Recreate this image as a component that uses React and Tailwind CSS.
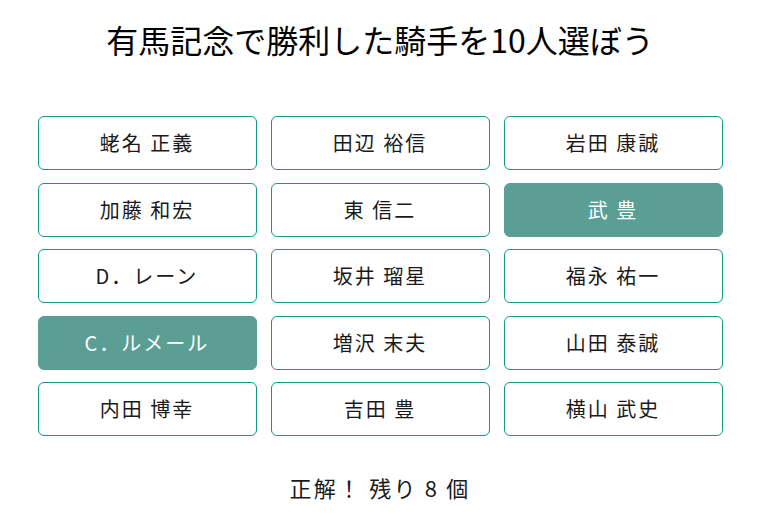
const JOCKEYS = [
  ["蛯名 正義", false],
  ["田辺 裕信", false],
  ["岩田 康誠", false],
  ["加藤 和宏", false],
  ["東 信二", false],
  ["武 豊", true],
  ["D．レーン", false],
  ["坂井 瑠星", false],
  ["福永 祐一", false],
  ["C．ルメール", true],
  ["増沢 末夫", false],
  ["山田 泰誠", false],
  ["内田 博幸", false],
  ["吉田 豊", false],
  ["横山 武史", false],
];

function JockeyButton({ name, picked }) {
  return (
    <button
      className={
        picked
          ? "h-[54px] rounded-[6px] border border-[#5a9e94] bg-[#5a9e94] text-white text-[20px] tracking-[0.1em]"
          : "h-[54px] rounded-[6px] border border-[#0f998a] bg-white text-[#1a1a1a] text-[20px] tracking-[0.1em]"
      }
    >
      {name}
    </button>
  );
}

export default function App() {
  return (
    <div
      className="w-[760px] h-[520px] bg-white flex flex-col items-center"
      style={{ fontFamily: '"Noto Sans CJK JP", "Noto Sans", sans-serif' }}
    >
      <h1 className="mt-[15px] text-[32px] leading-[48px] text-black">有馬記念で勝利した騎手を10人選ぼう</h1>

      <div className="mt-[53px] grid grid-cols-[219px_219px_219px] gap-x-[14px] gap-y-[12.5px]">
        {JOCKEYS.map(([name, picked]) => (
          <JockeyButton key={name} name={name} picked={picked} />
        ))}
      </div>

      <p className="mt-[35px] text-[22px] leading-[32px] tracking-[0.1em] text-[#1a1a1a]">正解！ 残り 8 個</p>
    </div>
  );
}
